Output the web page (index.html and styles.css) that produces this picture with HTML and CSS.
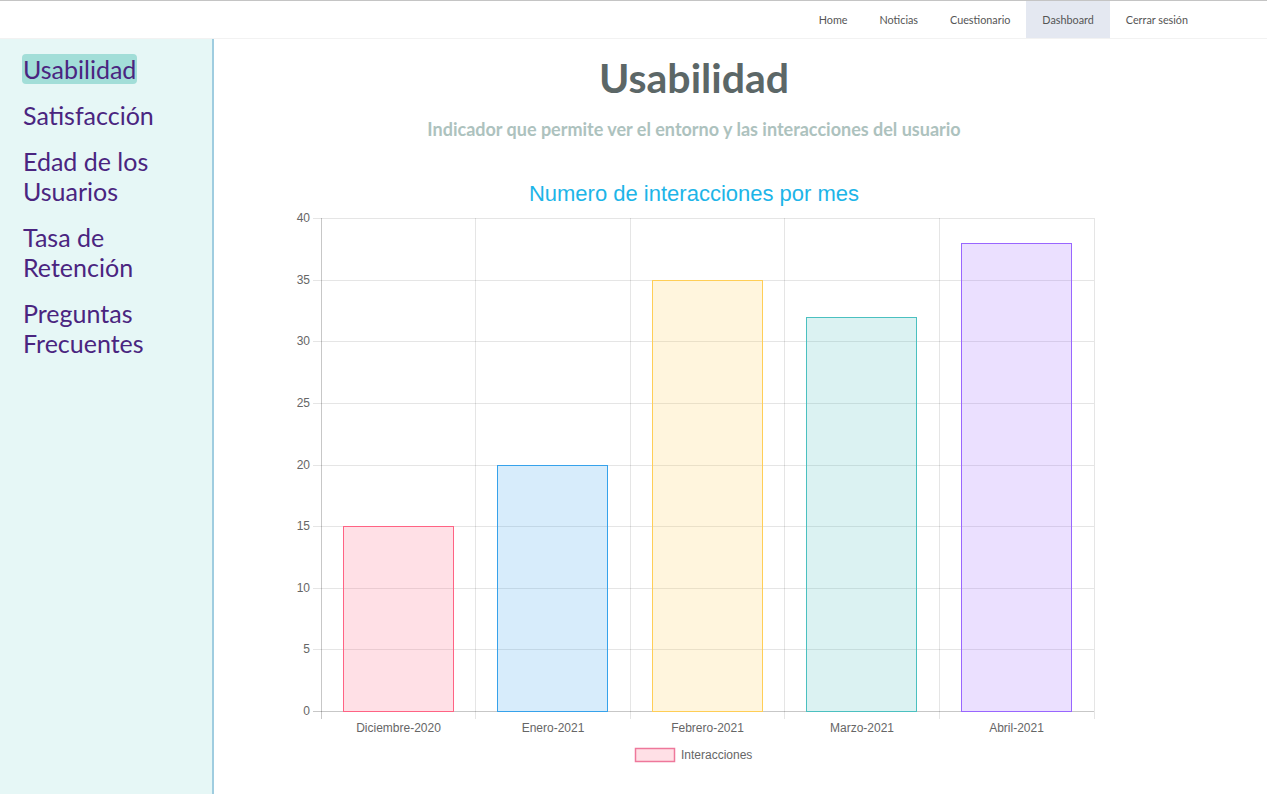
FILE: index.html
```html
<!DOCTYPE html>
<html lang="es">
<head>
<meta charset="utf-8">
<title>Dashboard - Usabilidad</title>
<link rel="stylesheet" href="styles.css">
</head>
<body>
<header class="topbar">
  <nav class="nav">
    <a class="nav-link" href="#">Home</a>
    <a class="nav-link" href="#">Noticias</a>
    <a class="nav-link" href="#">Cuestionario</a>
    <a class="nav-link active" href="#">Dashboard</a>
    <a class="nav-link" href="#">Cerrar sesión</a>
  </nav>
</header>
<div class="layout">
  <aside class="sidebar">
    <a class="side-link current" href="#">Usabilidad</a>
    <a class="side-link" href="#">Satisfacción</a>
    <a class="side-link" href="#">Edad de los Usuarios</a>
    <a class="side-link" href="#">Tasa de Retención</a>
    <a class="side-link" href="#">Preguntas Frecuentes</a>
  </aside>
  <main class="main">
    <h1 class="title">Usabilidad</h1>
    <p class="subtitle">Indicador que permite ver el entorno y las interacciones del usuario</p>
    <svg class="chart" width="830" height="600" viewBox="0 0 830 600" xmlns="http://www.w3.org/2000/svg">
      <text class="chart-title" x="415" y="31" text-anchor="middle">Numero de interacciones por mes</text>
      <!-- horizontal grid -->
      <g stroke="rgba(0,0,0,0.1)" stroke-width="1">
        <line x1="34" y1="48.5" x2="815" y2="48.5"/>
        <line x1="34" y1="110.5" x2="815" y2="110.5"/>
        <line x1="34" y1="171.5" x2="815" y2="171.5"/>
        <line x1="34" y1="233.5" x2="815" y2="233.5"/>
        <line x1="34" y1="295.5" x2="815" y2="295.5"/>
        <line x1="34" y1="356.5" x2="815" y2="356.5"/>
        <line x1="34" y1="418.5" x2="815" y2="418.5"/>
        <line x1="34" y1="479.5" x2="815" y2="479.5"/>
      </g>
      <!-- vertical grid -->
      <g stroke="rgba(0,0,0,0.1)" stroke-width="1">
        <line x1="196.5" y1="48" x2="196.5" y2="549"/>
        <line x1="351.5" y1="48" x2="351.5" y2="549"/>
        <line x1="505.5" y1="48" x2="505.5" y2="549"/>
        <line x1="660.5" y1="48" x2="660.5" y2="549"/>
        <line x1="815.5" y1="48" x2="815.5" y2="549"/>
      </g>
      <g stroke="rgba(0,0,0,0.22)" stroke-width="1">
        <line x1="42.5" y1="48" x2="42.5" y2="549"/>
        <line x1="34" y1="541.5" x2="815" y2="541.5"/>
      </g>
      <!-- y labels -->
      <g class="tick" text-anchor="end">
        <text x="31" y="52">40</text>
        <text x="31" y="114">35</text>
        <text x="31" y="175">30</text>
        <text x="31" y="237">25</text>
        <text x="31" y="299">20</text>
        <text x="31" y="360">15</text>
        <text x="31" y="422">10</text>
        <text x="31" y="483">5</text>
        <text x="31" y="545">0</text>
      </g>
      <!-- bars -->
      <rect x="64.5" y="356.5" width="110" height="185" fill="rgba(255,99,132,0.2)" stroke="rgb(255,99,132)" stroke-width="1"/>
      <rect x="218.5" y="295.5" width="110" height="246" fill="rgba(54,162,235,0.2)" stroke="rgb(54,162,235)" stroke-width="1"/>
      <rect x="373.5" y="110.5" width="110" height="431" fill="rgba(255,206,86,0.2)" stroke="rgb(255,206,86)" stroke-width="1"/>
      <rect x="527.5" y="147.5" width="110" height="394" fill="rgba(75,192,192,0.2)" stroke="rgb(75,192,192)" stroke-width="1"/>
      <rect x="682.5" y="73.5" width="110" height="468" fill="rgba(153,102,255,0.2)" stroke="rgb(153,102,255)" stroke-width="1"/>
      <!-- x labels -->
      <g class="tick" text-anchor="middle">
        <text x="119.5" y="562">Diciembre-2020</text>
        <text x="274" y="562">Enero-2021</text>
        <text x="428.5" y="562">Febrero-2021</text>
        <text x="583" y="562">Marzo-2021</text>
        <text x="737.5" y="562">Abril-2021</text>
      </g>
      <!-- legend -->
      <rect x="356.5" y="578.5" width="39" height="13" fill="rgba(255,99,132,0.2)" stroke="rgb(238,120,155)" stroke-width="1.5"/>
      <text class="tick" x="402" y="589">Interacciones</text>
    </svg>
  </main>
</div>
</body>
</html>
```

FILE: styles.css
```css
* {
  box-sizing: border-box;
}

html, body {
  margin: 0;
  padding: 0;
  height: 100%;
}

body {
  font-family: Lato, "Open Sans", Arial, sans-serif;
  background: #ffffff;
  display: flex;
  flex-direction: column;
  min-height: 100vh;
}

.topbar {
  border-top: 1px solid #c4c4c4;
  border-bottom: 1px solid #f2f2f2;
  height: 39px;
  display: flex;
  justify-content: flex-end;
  padding-right: 63px;
  background: #ffffff;
}

.nav {
  display: flex;
  align-items: stretch;
}

.nav-link {
  display: flex;
  align-items: center;
  padding: 0 16px;
  font-size: 10.8px;
  color: #555555;
  text-decoration: none;
  height: 37px;
}

.nav-link.active {
  background: #e4e8f1;
}

.layout {
  flex: 1;
  display: flex;
}

.sidebar {
  width: 214px;
  flex: 0 0 214px;
  background: #e6f7f6;
  border-right: 2px solid #9fcde0;
  padding: 15px 20px 0 22px;
  display: flex;
  flex-direction: column;
  gap: 16px;
}

.side-link {
  font-size: 25px;
  line-height: 30px;
  color: #4a2580;
  text-decoration: none;
  align-self: flex-start;
  padding: 0 1px 0 1px;
  border-radius: 4px;
}

.side-link.current {
  background: #a2ded8;
}

.main {
  flex: 1;
  display: flex;
  flex-direction: column;
  align-items: center;
  padding: 15px 93px 0 0;
}

.title {
  margin: 0;
  font-size: 41px;
  line-height: 48px;
  font-weight: 700;
  color: #5c6767;
}

.subtitle {
  margin: 15px 0 0 0;
  font-size: 18px;
  line-height: 24px;
  font-weight: 700;
  color: #adc2be;
}

.chart {
  display: block;
  margin-top: 29px;
}

.chart-title {
  font-family: "Liberation Sans", Arial, sans-serif;
  font-size: 22px;
  fill: #1db5e8;
}

.tick {
  font-family: "Liberation Sans", Arial, sans-serif;
  font-size: 12px;
  fill: #666666;
}
```
